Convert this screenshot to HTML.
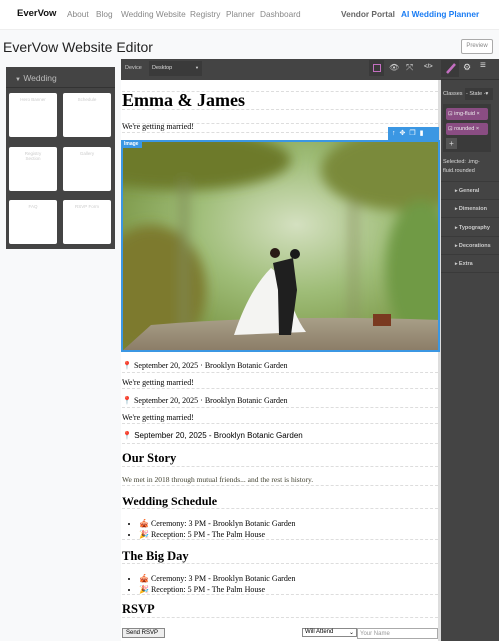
<!DOCTYPE html>
<html><head><style>
*{box-sizing:border-box;margin:0;padding:0}
body{width:499px;height:641px;overflow:hidden;background:#f8f9fa;font-family:"Liberation Sans",sans-serif;position:relative}
.abs{position:absolute}
.nav{left:0;top:0;width:499px;height:30px;background:#fff;border-bottom:1px solid #eee}
.nav span{position:absolute;top:9px;font-size:8.3px;color:#888;white-space:nowrap}
.ser{font-family:"Liberation Serif",serif}
.row{position:absolute;left:122px;width:316px;border-bottom:1px dashed #ddd}
.blk{position:absolute;width:48px;height:44px;background:#fff;border-radius:2px;font-size:4.5px;color:#ccc;text-align:center;padding-top:4px}
.rp{position:absolute;left:441px;width:58px;font-size:6px;color:#ddd}
.sec{position:absolute;left:441px;width:58px;height:18px;border-bottom:1px solid #3a3a3a;font-size:5.5px;font-weight:bold;color:#ccc;padding:6px 0 0 14px}
.sec:before{content:"▸ ";font-size:5px}
li{font-size:8px}
</style></head><body>
<div class="abs nav">
<span style="left:17px;color:#111;font-weight:bold;font-size:9.5px;top:8px">EverVow</span>
<span style="left:67px">About</span><span style="left:96px">Blog</span><span style="left:121px">Wedding Website</span><span style="left:190px">Registry</span><span style="left:226px">Planner</span><span style="left:260px">Dashboard</span>
<span style="left:341px;color:#666;font-weight:bold">Vendor Portal</span><span style="left:401px;color:#1a7cf3;font-weight:bold">AI Wedding Planner</span>
</div>
<div class="abs" style="left:3px;top:39px;font-size:14px;color:#222">EverVow Website Editor</div>
<div class="abs" style="left:461px;top:39px;width:32px;height:15px;border:1px solid #aaa;border-radius:2px;font-size:6px;color:#888;text-align:center;line-height:13px;background:#fff">Preview</div>
<div class="abs" style="left:6px;top:67px;width:109px;height:182px;background:#444"></div>
<div class="abs" style="left:6px;top:67px;width:109px;height:21px;border-bottom:1px solid #333;color:#bbb;font-size:8.5px;padding:6px 0 0 9px"><span style="font-size:6px">▼</span> Wedding</div>
<div class="blk" style="left:9px;top:93px">Hero Banner</div><div class="blk" style="left:63px;top:93px">Schedule</div>
<div class="blk" style="left:9px;top:147px">Registry<br>Section</div><div class="blk" style="left:63px;top:147px">Gallery</div>
<div class="blk" style="left:9px;top:200px">FAQ</div><div class="blk" style="left:63px;top:200px">RSVP Form</div>
<!-- editor -->
<div class="abs" style="left:121px;top:59px;width:378px;height:582px;background:#444"></div>
<div class="abs" style="left:121px;top:80px;width:319px;height:561px;background:#fff"></div>
<div class="abs" style="left:438px;top:80px;width:3px;height:561px;background:#ddd"></div>
<div class="abs" style="left:125px;top:65px;font-size:5.5px;color:#ccc">Device</div>
<div class="abs" style="left:149px;top:61px;width:53px;height:15px;background:#3a3a3a;font-size:5.5px;color:#ddd;padding:4px 3px">Desktop<span style="float:right;font-size:4px">▼</span></div>
<div class="abs" style="left:369px;top:60px;width:15px;height:16px;background:#3a3a3a"></div>
<div class="abs" style="left:373px;top:64px;width:8px;height:8px;border:1px solid #c36fc0"></div>
<div class="abs" style="left:389px;top:63px;font-size:8px;color:#ccc">👁</div>
<div class="abs" style="left:406px;top:62px;font-size:9px;color:#ccc">⤧</div>
<div class="abs" style="left:424px;top:64px;font-size:6px;color:#ccc;font-weight:bold">&lt;/&gt;</div>
<div class="abs" style="left:441px;top:60px;width:18px;height:17px;background:#3a3a3a"></div>
<svg class="abs" style="left:445px;top:62px" width="12" height="12"><path d="M2 11L10 2" stroke="#c36fc0" stroke-width="2.5"/></svg>
<div class="abs" style="left:463px;top:62px;font-size:9px;color:#ddd">⚙</div>
<div class="abs" style="left:480px;top:60px;font-size:10px;color:#ddd">≡</div>
<div class="abs" style="left:441px;top:79px;width:58px;height:1px;background:#333"></div>
<div class="rp" style="left:443px;top:91px;font-size:5.5px">Classes</div>
<div class="abs" style="left:465px;top:88px;width:28px;height:12px;background:#3a3a3a;font-size:5.5px;color:#ddd;padding:3px 1px">- State -▾</div>
<div class="abs" style="left:443px;top:104px;width:48px;height:48px;background:#3a3a3a"></div>
<div class="abs" style="left:446px;top:108px;width:42px;height:12px;background:#8a4d83;border-radius:2px;font-size:5.5px;color:#eee;padding:3px 2px">⊡ img-fluid ×</div>
<div class="abs" style="left:446px;top:123px;width:42px;height:12px;background:#8a4d83;border-radius:2px;font-size:5.5px;color:#eee;padding:3px 2px">⊡ rounded ×</div>
<div class="abs" style="left:446px;top:138px;width:11px;height:11px;background:#555;color:#ddd;font-size:8px;text-align:center;line-height:11px">+</div>
<div class="rp" style="left:443px;top:158px;font-size:5.5px;line-height:9px">Selected: .img-<br>fluid.rounded</div>
<div class="abs" style="left:441px;top:181px;width:58px;height:1px;background:#3a3a3a"></div>
<div class="sec" style="top:182px">General</div><div class="sec" style="top:200px">Dimension</div><div class="sec" style="top:219px">Typography</div><div class="sec" style="top:237px">Decorations</div><div class="sec" style="top:255px">Extra</div>
<!-- canvas content -->
<div class="row" style="top:80px;height:12px"></div>
<div class="row ser" style="top:91px;height:19px;font-size:18px;font-weight:bold;line-height:19px">Emma &amp; James</div>
<div class="row" style="top:110px;height:14px"></div>
<div class="row ser" style="top:122px;height:11px;font-size:8px">We're getting married!</div>
<div class="abs" style="left:388px;top:127px;width:51px;height:13px;background:#3b97e3;color:#fff;font-size:7px;padding:2px 4px;letter-spacing:4px">↑✥❐▮</div>
<svg class="abs" style="left:121px;top:140px" width="319" height="212" viewBox="0 0 319 212">
<defs><radialGradient id="g" cx=".55" cy=".4" r=".7"><stop offset="0" stop-color="#d4e0c0"/><stop offset=".45" stop-color="#9fbd78"/><stop offset="1" stop-color="#6f8a36"/></radialGradient>
<linearGradient id="r" y1="0" y2="1" x1="0" x2="0"><stop offset="0" stop-color="#a89f88"/><stop offset="1" stop-color="#8a7b66"/></linearGradient>
<filter id="b"><feGaussianBlur stdDeviation="6"/></filter></defs>
<rect width="319" height="212" fill="url(#g)"/>
<g filter="url(#b)">
<ellipse cx="60" cy="20" rx="110" ry="30" fill="#6d7a2c"/>
<ellipse cx="280" cy="30" rx="80" ry="40" fill="#7a8a3a"/>
<ellipse cx="30" cy="150" rx="55" ry="65" fill="#7d7a2e"/>
<ellipse cx="300" cy="130" rx="35" ry="70" fill="#6f9a45"/>
<rect x="60" y="40" width="6" height="150" fill="#7f8a55"/>
<rect x="230" y="60" width="5" height="130" fill="#8a9060"/>
</g>
<path d="M0 212L30 185Q160 174 319 180V212Z" fill="url(#r)"/>
<path d="M113 195Q128 150 150 128L163 138Q172 175 185 192Z" fill="#f4f4f2"/>
<path d="M152 123L172 118L176 150L170 195L158 195L157 150Z" fill="#1f1f1f"/>
<circle cx="154" cy="113" r="5" fill="#2a1a15"/><circle cx="174" cy="114" r="5" fill="#1a1a1a"/>
<rect x="252" y="174" width="18" height="12" fill="#7a3a20"/>
<rect x="1" y="1" width="317" height="210" fill="none" stroke="#3b97e3" stroke-width="2"/>
</svg>
<div class="abs" style="left:122px;top:140px;width:20px;height:8px;background:#3b97e3;color:#fff;font-size:5px;padding:1px 2px;font-weight:bold">Image</div>
<div class="row ser" style="top:361px;height:12px;font-size:8px"><span style="color:#e33">📍</span> September 20, 2025 · Brooklyn Botanic Garden</div>
<div class="row ser" style="top:378px;height:11px;font-size:8px">We're getting married!</div>
<div class="row ser" style="top:396px;height:12px;font-size:8px"><span style="color:#e33">📍</span> September 20, 2025 · Brooklyn Botanic Garden</div>
<div class="row ser" style="top:413px;height:11px;font-size:8px">We're getting married!</div>
<div class="row" style="top:431px;height:13px;font-size:8px"><span style="color:#e33">📍</span> September 20, 2025 - Brooklyn Botanic Garden</div>
<div class="row ser" style="top:451px;height:16px;font-size:12.5px;font-weight:bold">Our Story</div>
<div class="row ser" style="top:475px;height:11px;font-size:7.5px;color:#443">We met in 2018 through mutual friends... and the rest is history.</div>
<div class="row ser" style="top:494px;height:15px;font-size:12px;font-weight:bold">Wedding Schedule</div>
<div class="row ser" style="top:518px;height:22px"><ul style="padding-left:17px;line-height:11px"><li>🎪 Ceremony: 3 PM - Brooklyn Botanic Garden</li><li>🎉 Reception: 5 PM - The Palm House</li></ul></div>
<div class="row ser" style="top:549px;height:15px;font-size:12.5px;font-weight:bold">The Big Day</div>
<div class="row ser" style="top:573px;height:22px"><ul style="padding-left:17px;line-height:11px"><li>🎪 Ceremony: 3 PM - Brooklyn Botanic Garden</li><li>🎉 Reception: 5 PM - The Palm House</li></ul></div>
<div class="row ser" style="top:602px;height:16px;font-size:12.5px;font-weight:bold">RSVP</div>
<div class="abs" style="left:122px;top:628px;width:43px;height:10px;border:1px solid #888;background:#eee;font-size:6px;padding:1px 3px">Send RSVP</div>
<div class="abs" style="left:302px;top:628px;width:55px;height:9px;border:1px solid #888;background:#fff;font-size:6px;padding:0 2px">Will Attend<span style="float:right">⌄</span></div>
<div class="abs" style="left:357px;top:628px;width:81px;height:11px;border:1px solid #aaa;background:#fff;font-size:6px;color:#999;padding:2px">Your Name</div>
</body></html>
